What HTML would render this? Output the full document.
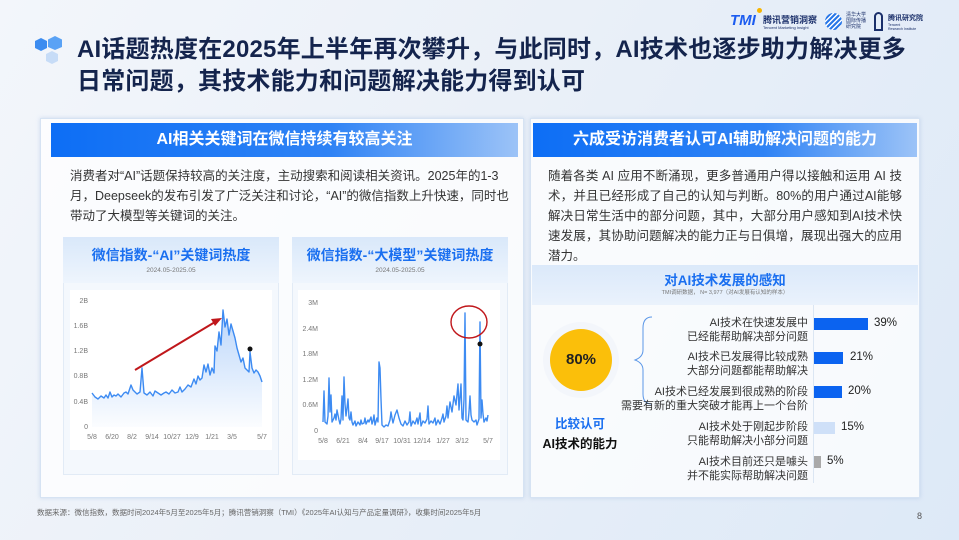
<!DOCTYPE html>
<html><head><meta charset="utf-8">
<style>
*{margin:0;padding:0;box-sizing:border-box}
body{width:959px;height:540px;overflow:hidden;position:relative;font-family:"Liberation Sans","Noto Sans CJK SC",sans-serif;background:linear-gradient(120deg,#f3f6fb 0%,#eaf0f8 45%,#dde9f7 100%);color:#333}
.abs{position:absolute}
.title{left:77px;top:34px;font-size:24px;line-height:32px;font-weight:bold;color:#14244d;letter-spacing:0.2px}
.panel{background:rgba(255,255,255,0.75);border:1px solid #d6e3f3;box-shadow:0 0 4px rgba(150,180,220,.4)}
.hdr{background:linear-gradient(90deg,#0d6ef5 0%,#2f83f5 60%,#9cc3f7 100%);color:#fff;font-weight:bold;font-size:16px;text-align:center;line-height:34px;height:34px}
.para{font-size:12.5px;line-height:20px;color:#333}
.sub{background:#fff;border:1px solid #e2ebf6}
.subh{background:linear-gradient(180deg,#d9e8fa,#eef5fd);height:46px;text-align:center}
.subh b{display:block;color:#1a6ff0;font-size:14px;padding-top:8px}
.subh i{display:block;font-style:normal;font-size:6.5px;color:#777;margin-top:2px}
.lab{font-size:11px;line-height:14px;text-align:right;color:#333;width:200px}
.pct{font-size:11.5px;color:#222}
</style></head><body>

<!-- logos -->
<div class="abs" style="left:730px;top:12px;font-size:15px;font-weight:900;color:#1c5cf0;font-style:italic">TMI</div>
<div class="abs" style="left:733px;top:8px;width:5px;height:5px;border-radius:50%;background:#f7b500;left:757px"></div>
<div class="abs" style="left:763px;top:13px;font-size:9px;font-weight:bold;color:#1a2f6a">腾讯营销洞察</div>
<div class="abs" style="left:763px;top:25px;font-size:4px;color:#1a2f6a">Tencent Marketing Insight</div>
<div class="abs" style="left:825px;top:13px;width:17px;height:17px;border-radius:50%;background:repeating-linear-gradient(135deg,#2a78e8 0 2px,#fff 2px 3.5px)"></div>
<div class="abs" style="left:846px;top:12px;font-size:5px;line-height:6px;color:#1a2f6a">清华大学<br>国际传播<br>研究院</div>
<div class="abs" style="left:874px;top:12px;width:9px;height:19px;border:2px solid #1a2f6a;border-radius:5px 5px 0 0"></div>
<div class="abs" style="left:888px;top:13px;font-size:7px;font-weight:bold;color:#1a2f6a">腾讯研究院</div>
<div class="abs" style="left:888px;top:23px;font-size:3.5px;line-height:4px;color:#1a2f6a">Tencent<br>Research Institute</div>

<!-- hex icon -->
<svg class="abs" style="left:33px;top:36px" width="34" height="32" viewBox="0 0 34 32">
<polygon points="8,2 14,5 14,12 8,15 2,12 2,5" fill="#3c8cf0"/>
<polygon points="22,0 29,3.5 29,11 22,14 15,11 15,3.5" fill="#5aa2f5"/>
<polygon points="19,15 25,18 25,25 19,28 13,25 13,18" fill="#c7dcf7"/>
</svg>
<div class="abs title">AI话题热度在2025年上半年再次攀升，与此同时，AI技术也逐步助力解决更多<br>日常问题，其技术能力和问题解决能力得到认可</div>

<!-- left panel -->
<div class="abs panel" style="left:40px;top:118px;width:484px;height:380px"></div>
<div class="abs hdr" style="left:51px;top:123px;width:467px">AI相关关键词在微信持续有较高关注</div>
<div class="abs para" style="left:70px;top:166px;width:440px">消费者对“AI”话题保持较高的关注度，主动搜索和阅读相关资讯。2025年的1-3月，Deepseek的发布引发了广泛关注和讨论，“AI”的微信指数上升快速，同时也带动了大模型等关键词的关注。</div>

<div class="abs sub" style="left:63px;top:237px;width:216px;height:238px;background:#f4f8fd"></div>
<div class="abs subh" style="left:63px;top:237px;width:216px"><b>微信指数-“AI”关键词热度</b><i>2024.05-2025.05</i></div>
<div class="abs sub" style="left:292px;top:237px;width:216px;height:238px;background:#f4f8fd"></div>
<div class="abs subh" style="left:292px;top:237px;width:216px"><b>微信指数-“大模型”关键词热度</b><i>2024.05-2025.05</i></div>

<svg class="abs" style="left:0;top:0" width="959" height="540" viewBox="0 0 959 540">
<defs><linearGradient id="g1" x1="0" y1="0" x2="0" y2="1"><stop offset="0" stop-color="#3d8bf2" stop-opacity=".35"/><stop offset="1" stop-color="#3d8bf2" stop-opacity="0.02"/></linearGradient></defs>
<rect x="70" y="290" width="202" height="160" fill="#fff"/>
<rect x="298" y="290" width="202" height="170" fill="#fff"/>
<g font-size="7" fill="#777" font-family="Liberation Sans">
<text x="88" y="303" text-anchor="end">2B</text><text x="88" y="328" text-anchor="end">1.6B</text><text x="88" y="353" text-anchor="end">1.2B</text><text x="88" y="378" text-anchor="end">0.8B</text><text x="88" y="404" text-anchor="end">0.4B</text><text x="88" y="429" text-anchor="end">0</text>
<text x="92" y="439" text-anchor="middle">5/8</text><text x="112" y="439" text-anchor="middle">6/20</text><text x="132" y="439" text-anchor="middle">8/2</text><text x="152" y="439" text-anchor="middle">9/14</text><text x="172" y="439" text-anchor="middle">10/27</text><text x="192" y="439" text-anchor="middle">12/9</text><text x="212" y="439" text-anchor="middle">1/21</text><text x="232" y="439" text-anchor="middle">3/5</text><text x="262" y="439" text-anchor="middle">5/7</text>
<text x="318" y="305" text-anchor="end">3M</text><text x="318" y="331" text-anchor="end">2.4M</text><text x="318" y="356" text-anchor="end">1.8M</text><text x="318" y="382" text-anchor="end">1.2M</text><text x="318" y="407" text-anchor="end">0.6M</text><text x="318" y="433" text-anchor="end">0</text>
<text x="323" y="443" text-anchor="middle">5/8</text><text x="343" y="443" text-anchor="middle">6/21</text><text x="363" y="443" text-anchor="middle">8/4</text><text x="382" y="443" text-anchor="middle">9/17</text><text x="402" y="443" text-anchor="middle">10/31</text><text x="422" y="443" text-anchor="middle">12/14</text><text x="443" y="443" text-anchor="middle">1/27</text><text x="462" y="443" text-anchor="middle">3/12</text><text x="488" y="443" text-anchor="middle">5/7</text>
</g>
<polygon fill="url(#g1)" points="92,427 92,393 95,397 98,399 101,396 104,398 106,395 108,398 110,392 112,397 114,395 116,396 118,394 121,397 124,393 126,392 128,394 131,385 133,390 135,392 137,394 140,392 142,368 144,393 147,395 150,392 153,396 155,391 158,393 161,395 164,393 166,392 169,394 172,390 175,393 178,392 180,387 182,392 185,389 188,385 191,387 194,379 196,384 198,376 200,380 202,378 204,365 206,372 208,364 210,375 212,368 214,373 215,346 217,351 219,332 221,345 223,310 225,327 227,319 229,335 231,324 233,331 235,338 237,348 239,355 241,362 243,358 245,368 247,370 249,372 250,352 252,368 254,373 256,370 258,372 260,376 262,382 262,427"/>
<polyline fill="none" stroke="#3d8bf2" stroke-width="1.4" stroke-linejoin="round" points="92,393 95,397 98,399 101,396 104,398 106,395 108,398 110,392 112,397 114,395 116,396 118,394 121,397 124,393 126,392 128,394 131,385 133,390 135,392 137,394 140,392 142,368 144,393 147,395 150,392 153,396 155,391 158,393 161,395 164,393 166,392 169,394 172,390 175,393 178,392 180,387 182,392 185,389 188,385 191,387 194,379 196,384 198,376 200,380 202,378 204,365 206,372 208,364 210,375 212,368 214,373 215,346 217,351 219,332 221,345 223,310 225,327 227,319 229,335 231,324 233,331 235,338 237,348 239,355 241,362 243,358 245,368 247,370 249,372 250,352 252,368 254,373 256,370 258,372 260,376 262,382"/>
<line x1="135" y1370="" y1="370" x2="215" y2="322" stroke="#c0171b" stroke-width="2"/>
<polygon points="222,318 211,319 215,326" fill="#c0171b"/>
<circle cx="250" cy="349" r="2.5" fill="#111"/>
<polyline fill="none" stroke="#3d8bf2" stroke-width="1.4" stroke-linejoin="round" points="323,422 324,391 325,422 327,424 328,416 329,378 330,412 331,395 332,422 334,418 335,414 336,420 337,410 339,420 340,424 341,419 342,396 343,420 344,377 345,404 346,416 347,408 348,399 349,418 350,420 351,412 352,422 353,425 355,421 356,426 358,422 360,425 361,420 362,424 364,423 365,418 366,424 368,420 369,422 371,417 372,424 373,421 374,415 375,425 377,418 378,422 379,362 380,368 381,399 382,425 384,427 386,425 388,426 390,420 391,412 392,418 393,423 395,415 397,410 399,418 401,424 403,426 405,421 407,425 409,422 410,412 411,426 413,421 415,424 417,418 418,424 420,413 421,426 423,421 425,423 427,419 428,406 429,424 431,421 433,423 435,418 436,425 438,420 440,424 442,418 443,414 444,422 446,416 447,406 448,418 450,402 452,412 454,396 456,405 458,384 459,410 460,397 461,384 462,418 463,420 464,399 465,313 466,420 468,422 469,412 470,396 471,415 472,420 474,422 476,420 477,425 479,419 480,322 481,418 482,400 483,414 484,422 486,418 487,421 488,415"/>
<ellipse cx="469" cy="322" rx="18" ry="16" fill="none" stroke="#c0171b" stroke-width="1.4"/>
<circle cx="480" cy="344" r="2.5" fill="#111"/>
</svg>

<!-- right panel -->
<div class="abs panel" style="left:530px;top:118px;width:390px;height:380px"></div>
<div class="abs hdr" style="left:533px;top:123px;width:384px">六成受访消费者认可AI辅助解决问题的能力</div>
<div class="abs para" style="left:548px;top:166px;width:354px;text-align:justify">随着各类 AI 应用不断涌现，更多普通用户得以接触和运用 AI 技术，并且已经形成了自己的认知与判断。80%的用户通过AI能够解决日常生活中的部分问题，其中，大部分用户感知到AI技术快速发展，其协助问题解决的能力正与日俱增，展现出强大的应用潜力。</div>

<div class="abs" style="left:532px;top:265px;width:386px;height:40px;background:linear-gradient(180deg,#dbe9fa,#eaf2fc)"></div>
<div class="abs" style="left:532px;top:269px;width:386px;text-align:center;font-size:13.5px;font-weight:bold;color:#1a6ff0">对AI技术发展的感知</div>
<div class="abs" style="left:532px;top:288px;width:386px;text-align:center;font-size:5.5px;color:#777">TMI调研数据， N= 3,977（对AI发展有认知的样本）</div>

<div class="abs" style="left:543px;top:322px;width:76px;height:76px;border-radius:50%;background:#f3f6fb"></div>
<div class="abs" style="left:550px;top:329px;width:62px;height:62px;border-radius:50%;background:#fbbf0a;text-align:center;line-height:62px;font-size:15px;font-weight:bold;color:#222">80%</div>
<div class="abs" style="left:530px;top:413px;width:100px;text-align:center;font-size:12.5px;font-weight:bold;color:#1a6ff0">比较认可</div>
<div class="abs" style="left:530px;top:433px;width:100px;text-align:center;font-size:12.5px;font-weight:bold;color:#111">AI技术的能力</div>

<svg class="abs" style="left:630px;top:312px" width="30" height="96"><path d="M22,5 Q13,5 13,16 L13,38 Q13,45 5,48 Q13,51 13,58 L13,82 Q13,92 22,92" fill="none" stroke="#5b97e8" stroke-width="1"/></svg>

<div class="abs" style="left:813px;top:305px;width:1px;height:178px;background:#dbe6f3"></div>
<div class="abs lab" style="left:608px;top:316px">AI技术在快速发展中<br>已经能帮助解决部分问题</div>
<div class="abs lab" style="left:608px;top:350px">AI技术已发展得比较成熟<br>大部分问题都能帮助解决</div>
<div class="abs lab" style="left:608px;top:385px">AI技术已经发展到很成熟的阶段<br>需要有新的重大突破才能再上一个台阶</div>
<div class="abs lab" style="left:608px;top:420px">AI技术处于刚起步阶段<br>只能帮助解决小部分问题</div>
<div class="abs lab" style="left:608px;top:455px">AI技术目前还只是噱头<br>并不能实际帮助解决问题</div>
<div class="abs" style="left:814px;top:318px;width:54px;height:12px;background:#0b63f0"></div>
<div class="abs" style="left:814px;top:352px;width:29px;height:12px;background:#0b63f0"></div>
<div class="abs" style="left:814px;top:386px;width:28px;height:12px;background:#0b63f0"></div>
<div class="abs" style="left:814px;top:422px;width:21px;height:12px;background:#cfe0f8"></div>
<div class="abs" style="left:814px;top:456px;width:7px;height:12px;background:#a9a9a9"></div>
<div class="abs pct" style="left:874px;top:317px">39%</div>
<div class="abs pct" style="left:850px;top:351px">21%</div>
<div class="abs pct" style="left:848px;top:385px">20%</div>
<div class="abs pct" style="left:841px;top:421px">15%</div>
<div class="abs pct" style="left:827px;top:455px">5%</div>

<div class="abs" style="left:37px;top:507px;font-size:7.5px;color:#666">数据来源：微信指数，数据时间2024年5月至2025年5月；腾讯营销洞察（TMI）《2025年AI认知与产品定量调研》，收集时间2025年5月</div>
<div class="abs" style="left:917px;top:511px;font-size:9px;color:#555">8</div>
</body></html>
